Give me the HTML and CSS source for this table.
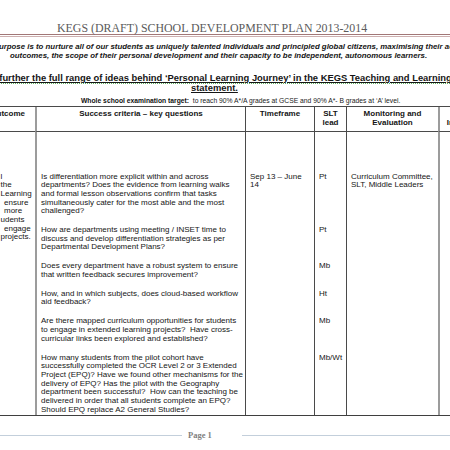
FILE: index.html
```html
<!DOCTYPE html>
<html lang="en">
<head>
<meta charset="utf-8">
<title>KEGS (DRAFT) School Development Plan 2013-2014</title>
<link rel="stylesheet" href="styles.css">
</head>
<body>
<div class="page">
  <h1 class="title">KEGS (DRAFT) SCHOOL DEVELOPMENT PLAN 2013-2014</h1>
  <div class="rule"></div>
  <p class="purpose"><span class="line l1">Our purpose is to nurture all of our students as uniquely talented individuals and principled global citizens, maximising their academic</span><span class="line l2">outcomes, the scope of their personal development and their capacity to be independent, autonomous learners.</span></p>
  <p class="aim"><span class="line l1"><span class="squiggle">To further the full range of ideas behind ‘Personal Learning Journey’ in the KEGS Teaching and Learning</span></span><span class="line l2">statement.</span></p>
  <p class="target"><b>Whole school examination target:</b>&nbsp; to reach 90% A*/A grades at GCSE and 90% A*- B grades at ‘A’ level.</p>

  <div class="plan">
    <div class="th c1">Outcome</div>
    <div class="th c2">Success criteria – key questions</div>
    <div class="th c3">Timeframe</div>
    <div class="th c4">SLT<br>lead</div>
    <div class="th c5">Monitoring and<br>Evaluation</div>
    <div class="th c6">Resource<br>Implications</div>

    <div class="td c1 span">
      <div class="frag">l</div>
      <div class="frag">the</div>
      <div class="frag">Learning</div>
      <div class="frag ind">ensure</div>
      <div class="frag ind">more</div>
      <div class="frag">udents</div>
      <div class="frag ind">engage</div>
      <div class="frag">projects.</div>
    </div>
    <div class="td c3 span">Sep 13 – June<br>14</div>
    <div class="td c5 span">Curriculum Committee,<br>SLT, Middle Leaders</div>
    <div class="td c6 span"></div>

    <div class="td c2 q first">Is differentiation more explicit within and across<br>departments? Does the evidence from learning walks<br>and formal lesson observations confirm that tasks<br>simultaneously cater for the most able and the most<br>challenged?</div>
    <div class="td c4 q first">Pt</div>

    <div class="td c2 q">How are departments using meeting / INSET time to<br>discuss and develop differentiation strategies as per<br>Departmental Development Plans?</div>
    <div class="td c4 q">Pt</div>

    <div class="td c2 q">Does every department have a robust system to ensure<br>that written feedback secures improvement?</div>
    <div class="td c4 q">Mb</div>

    <div class="td c2 q">How, and in which subjects, does cloud-based workflow<br>aid feedback?</div>
    <div class="td c4 q">Ht</div>

    <div class="td c2 q">Are there mapped curriculum opportunities for students<br>to engage in extended learning projects?&nbsp; Have cross-<br>curricular links been explored and established?</div>
    <div class="td c4 q">Mb</div>

    <div class="td c2 q last">How many students from the pilot cohort have<br>successfully completed the OCR Level 2 or 3 Extended<br>Project (EPQ)? Have we found other mechanisms for the<br>delivery of EPQ? Has the pilot with the Geography<br>department been successful?&nbsp; How can the teaching be<br>delivered in order that all students complete an EPQ?<br>Should EPQ replace A2 General Studies?</div>
    <div class="td c4 q last">Mb/Wt</div>
  </div>

  <div class="footer">
    <span class="fline"></span>
    <span class="pnum">Page 1</span>
    <span class="fline"></span>
  </div>
</div>
</body>
</html>
```

FILE: styles.css
```css
html, body {
  margin: 0;
  padding: 0;
  width: 450px;
  height: 450px;
  overflow: hidden;
  background: #ffffff;
}

body {
  font-family: "Liberation Sans", Arial, sans-serif;
  color: #151515;
}

.page {
  width: 450px;
}

.line {
  display: block;
  white-space: nowrap;
}

.title {
  margin: 0;
  padding: 21px 0 0 57px;
  text-align: left;
  font-family: "Liberation Serif", "Times New Roman", serif;
  font-weight: normal;
  font-size: 11.9px;
  line-height: 14px;
  color: #5b5b5b;
  white-space: nowrap;
}

.rule {
  margin-top: -1px;
  height: 1px;
  border-top: 1px solid #a27777;
  border-bottom: 1px solid #cdb0b0;
}

.purpose {
  margin: 4.5px 0 0;
  font-weight: bold;
  font-style: italic;
  font-size: 7.85px;
  line-height: 9px;
}

.purpose .l1 {
  margin-left: -22px;
}

.purpose .l2 {
  padding-left: 10px;
}

.aim {
  margin: 13.5px 0 0;
  font-weight: bold;
  font-size: 9.4px;
  line-height: 10px;
  text-decoration: underline;
}

.aim .l1 {
  margin-left: -14.1px;
}

.aim .l2 {
  padding-left: 191px;
}

.squiggle {
  border-bottom: 1px dotted #63b063;
}

.target {
  margin: 2.5px 0 0;
  padding-left: 81px;
  font-size: 6.75px;
  line-height: 9px;
  color: #222;
  white-space: nowrap;
}

.target b {
  color: #111;
}

.plan {
  margin: 1.5px 0 0 -60px;
  width: 560px;
  display: grid;
  grid-template-columns: 95px 210px 69px 32px 92px 62px;
  border-top: 1px solid #4a4a4a;
  border-bottom: 1px solid #3f3f3f;
  font-size: 8px;
  line-height: 8.67px;
  white-space: nowrap;
}

.th {
  font-weight: bold;
  text-align: center;
  padding: 1.5px 1px 4.5px;
  line-height: 9px;
  border-bottom: 1px solid #4a4a4a;
}

.th.c1 {
  text-align: right;
  padding-right: 10px;
}

.c1 { grid-column: 1; }
.c3 { grid-column: 3; }
.c4 { grid-column: 4; }
.c5 { grid-column: 5; }

.c3, .c4, .c5 {
  border-left: 1px solid #4a4a4a;
}

.c2 {
  grid-column: 2;
  border-left: 2px solid #9c9c9c;
}

.c6 {
  grid-column: 6;
  border-left: 2px solid #9c9c9c;
}

.td.span {
  grid-row: 2 / 8;
  padding-top: 40.5px;
}

.td.c1 {
  padding-left: 60.5px;
  overflow: hidden;
}

.frag.ind {
  padding-left: 3.5px;
}

.td.c3 {
  padding-left: 4px;
}

.td.c5 {
  padding-left: 4px;
}

.td.c2 {
  padding-left: 4px;
}

.td.c4 {
  padding-left: 4px;
}

.q {
  padding-bottom: 10.2px;
}

.q.first {
  padding-top: 40.5px;
}

.q.last {
  padding-bottom: 0.8px;
}

.footer {
  display: flex;
  align-items: center;
  margin-top: 14px;
  gap: 6px;
  height: 10px;
}

.fline {
  height: 1px;
  background: #c3cfdb;
}

.fline:first-child {
  width: 182px;
}

.fline:last-child {
  flex: 1;
  margin-left: 24px;
}

.pnum {
  font-family: "Liberation Serif", "Times New Roman", serif;
  font-weight: bold;
  font-size: 8.5px;
  line-height: 10px;
  color: #7f7f7f;
}
```
